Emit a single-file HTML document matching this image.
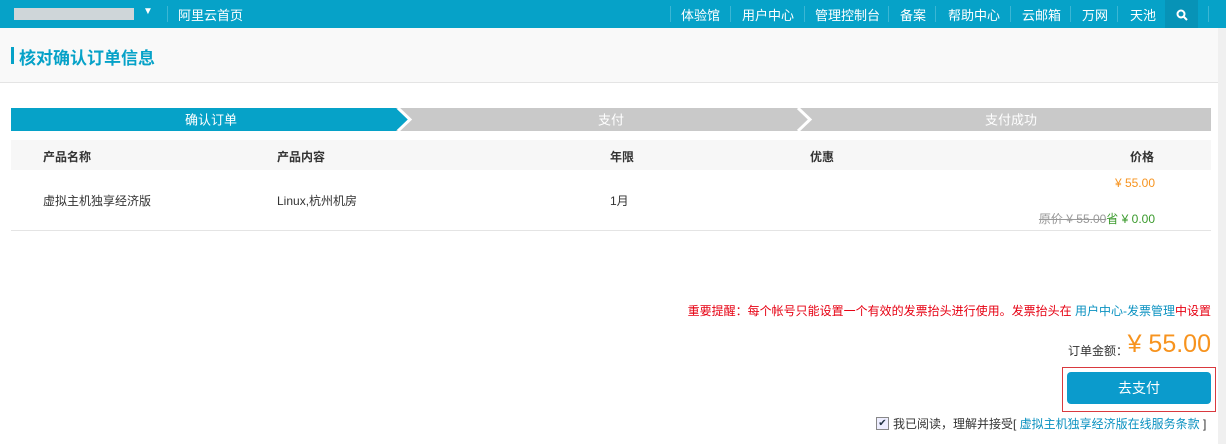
<!DOCTYPE html>
<html><head><meta charset="utf-8"><style>
body{margin:0;width:1226px;height:444px;overflow:hidden;background:#fff;font-family:"Liberation Sans","Noto Sans CJK SC",sans-serif;font-size:12px;color:#333;position:relative}
.top{position:absolute;left:0;top:0;width:1226px;height:28px;background:#06a2c8;color:#fff;font-size:13px}
.top span{position:absolute;top:5px}
.sep{position:absolute;top:6px;width:1px;height:16px;background:#3bb6d4}
.hd{position:absolute;top:28px;left:0;width:1226px;height:54px;background:#f9f9f9;border-bottom:1px solid #e4e4e4}
.hd b{position:absolute;left:11px;top:19px;width:3px;height:17px;background:#06a2c8}
.hd span{position:absolute;left:19px;top:16px;font-size:17px;color:#06a2c8;font-weight:bold}
.a{position:absolute;white-space:nowrap}
</style></head><body>
<div class="top">
<div style="position:absolute;left:14px;top:8px;width:120px;height:12px;background:#cfd6d9"></div>
<span style="left:143px;top:6px;font-size:10px">▼</span>
<div class="sep" style="left:167px"></div>
<span style="left:178px">阿里云首页</span>
<div class="sep" style="left:670px"></div><span style="left:681px">体验馆</span>
<div class="sep" style="left:730px"></div><span style="left:742px">用户中心</span>
<div class="sep" style="left:804px"></div><span style="left:815px">管理控制台</span>
<div class="sep" style="left:888px"></div><span style="left:900px">备案</span>
<div class="sep" style="left:935px"></div><span style="left:948px">帮助中心</span>
<div class="sep" style="left:1010px"></div><span style="left:1022px">云邮箱</span>
<div class="sep" style="left:1070px"></div><span style="left:1082px">万网</span>
<div class="sep" style="left:1117px"></div><span style="left:1130px">天池</span>
<div style="position:absolute;left:1165px;top:0;width:33px;height:28px;background:#0793b7"></div>
<svg style="position:absolute;left:1176px;top:9px" width="12" height="12"><circle cx="5" cy="5" r="3.5" stroke="#fff" stroke-width="2" fill="none"/><path d="M7.5 7.5L11 11" stroke="#fff" stroke-width="2"/></svg>
<div class="sep" style="left:1208px"></div>
</div>
<div class="hd"><b></b><span>核对确认订单信息</span></div>
<div style="position:absolute;left:1218px;top:28px;width:8px;height:416px;background:#f0f0f0"></div>
<svg style="position:absolute;left:11px;top:108px" width="1200" height="24">
<rect x="0" y="0" width="1200" height="23" fill="#c9c9c9"/>
<path d="M0 0H385L397 11.5L385 23H0Z" fill="#06a2c8"/>
<path d="M387 0L399 11.5L387 23" stroke="#fff" stroke-width="3" fill="none"/>
<path d="M787 0L799 11.5L787 23" stroke="#fff" stroke-width="3" fill="none"/>
<text x="200" y="16.5" fill="#fff" font-size="13" text-anchor="middle" font-family="Liberation Sans,Noto Sans CJK SC,sans-serif">确认订单</text>
<text x="600" y="16.5" fill="#fff" font-size="13" text-anchor="middle" font-family="Liberation Sans,Noto Sans CJK SC,sans-serif">支付</text>
<text x="1000" y="16.5" fill="#fff" font-size="13" text-anchor="middle" font-family="Liberation Sans,Noto Sans CJK SC,sans-serif">支付成功</text>
</svg>
<div style="position:absolute;left:11px;top:140px;width:1200px;height:30px;background:#f7f7f7"></div>
<div style="position:absolute;left:11px;top:230px;width:1200px;height:1px;background:#e4e4e4"></div>
<div class="a" style="left:43px;top:148px;font-weight:bold">产品名称</div>
<div class="a" style="left:277px;top:148px;font-weight:bold">产品内容</div>
<div class="a" style="left:610px;top:148px;font-weight:bold">年限</div>
<div class="a" style="left:810px;top:148px;font-weight:bold">优惠</div>
<div class="a" style="left:1130px;top:148px;font-weight:bold">价格</div>
<div class="a" style="left:43px;top:192px">虚拟主机独享经济版</div>
<div class="a" style="left:277px;top:192px">Linux,杭州机房</div>
<div class="a" style="left:610px;top:192px">1月</div>
<div class="a" style="right:71px;top:176px;color:#f7931e">¥ 55.00</div>
<div class="a" style="right:71px;top:210px"><s style="color:#999">原价 ¥ 55.00</s><span style="color:#3a9a2c">省 ¥ 0.00</span></div>
<div class="a" style="right:15px;top:302px;color:#e60012">重要提醒：每个帐号只能设置一个有效的发票抬头进行使用。发票抬头在 <span style="color:#0a91c0">用户中心-发票管理</span>中设置</div>
<div class="a" style="left:1068px;top:342px">订单金额：</div>
<div class="a" style="right:15px;top:330px;font-size:25px;color:#f7931e">¥ 55.00</div>
<div style="position:absolute;left:1062px;top:367px;width:154px;height:45px;border:1px solid #d9393e;box-sizing:border-box"></div>
<div style="position:absolute;left:1067px;top:372px;width:144px;height:32px;background:#0b9bcc;border-radius:4px;color:#fff;font-size:14px;text-align:center;line-height:32px">去支付</div>
<div style="position:absolute;left:876px;top:417px;width:11px;height:11px;border:1px solid #888;background:#eef;font-size:10px;line-height:11px;text-align:center;color:#234">✔</div>
<div class="a" style="left:893px;top:415px">我已阅读，理解并接受[ <span style="color:#0a91c0">虚拟主机独享经济版在线服务条款</span> ]</div>
</body></html>
